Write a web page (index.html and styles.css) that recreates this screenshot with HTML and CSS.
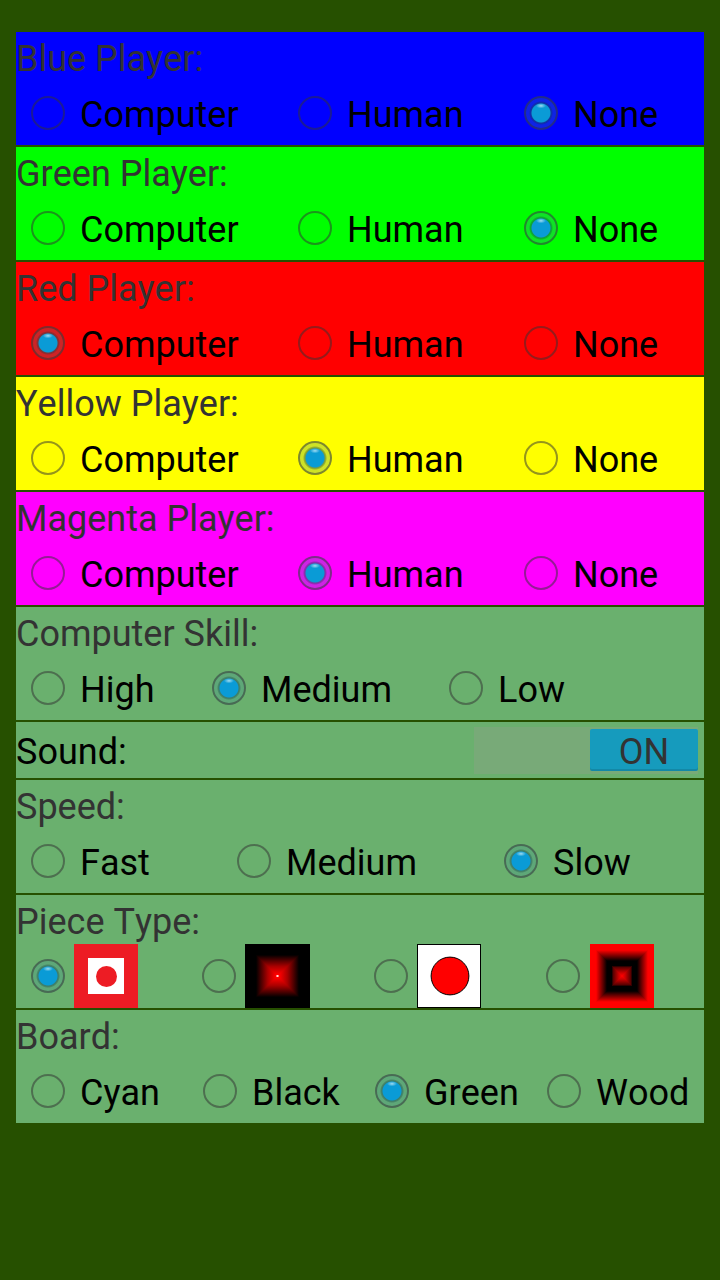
FILE: index.html
```html
<!DOCTYPE html>
<html lang="en">
<head>
  <meta charset="UTF-8" />
  <meta name="viewport" content="width=device-width, initial-scale=1.0" />
  <title>Options</title>
  <link rel="stylesheet" href="styles.css">
</head>
<body>

  <svg class="defs" width="0" height="0">
    <defs>
      <linearGradient id="glowStops">
        <stop offset="0" stop-color="#000" />
        <stop offset="0.34" stop-color="#000" />
        <stop offset="0.7" stop-color="#a00" />
        <stop offset="0.95" stop-color="#f00" />
        <stop offset="1" stop-color="#f22" />
      </linearGradient>
      <linearGradient id="ringStops">
        <stop offset="0" stop-color="#f00" />
        <stop offset="0.19" stop-color="#f00" />
        <stop offset="0.53" stop-color="#000" />
        <stop offset="0.68" stop-color="#000" />
        <stop offset="0.72" stop-color="#500" />
        <stop offset="0.9" stop-color="#c00" />
        <stop offset="1" stop-color="#f00" />
      </linearGradient>
      <linearGradient id="glowTop" href="#glowStops" gradientUnits="userSpaceOnUse" x1="0" y1="0" x2="0" y2="32" />
      <linearGradient id="glowBottom" href="#glowStops" gradientUnits="userSpaceOnUse" x1="0" y1="64" x2="0" y2="32" />
      <linearGradient id="glowLeft" href="#glowStops" gradientUnits="userSpaceOnUse" x1="0" y1="0" x2="32" y2="0" />
      <linearGradient id="glowRight" href="#glowStops" gradientUnits="userSpaceOnUse" x1="64" y1="0" x2="32" y2="0" />
      <linearGradient id="ringTop" href="#ringStops" gradientUnits="userSpaceOnUse" x1="0" y1="0" x2="0" y2="32" />
      <linearGradient id="ringBottom" href="#ringStops" gradientUnits="userSpaceOnUse" x1="0" y1="64" x2="0" y2="32" />
      <linearGradient id="ringLeft" href="#ringStops" gradientUnits="userSpaceOnUse" x1="0" y1="0" x2="32" y2="0" />
      <linearGradient id="ringRight" href="#ringStops" gradientUnits="userSpaceOnUse" x1="64" y1="0" x2="32" y2="0" />
    </defs>
  </svg>

  <div class="panel">

    <section class="group blue">
      <div class="title">Blue Player:</div>
      <div class="options players">
        <label class="option"><span class="radio"></span>Computer</label>
        <label class="option"><span class="radio"></span>Human</label>
        <label class="option"><span class="radio on"></span>None</label>
      </div>
    </section>

    <section class="group green">
      <div class="title">Green Player:</div>
      <div class="options players">
        <label class="option"><span class="radio"></span>Computer</label>
        <label class="option"><span class="radio"></span>Human</label>
        <label class="option"><span class="radio on"></span>None</label>
      </div>
    </section>

    <section class="group red">
      <div class="title">Red Player:</div>
      <div class="options players">
        <label class="option"><span class="radio on"></span>Computer</label>
        <label class="option"><span class="radio"></span>Human</label>
        <label class="option"><span class="radio"></span>None</label>
      </div>
    </section>

    <section class="group yellow">
      <div class="title">Yellow Player:</div>
      <div class="options players">
        <label class="option"><span class="radio"></span>Computer</label>
        <label class="option"><span class="radio on"></span>Human</label>
        <label class="option"><span class="radio"></span>None</label>
      </div>
    </section>

    <section class="group magenta">
      <div class="title">Magenta Player:</div>
      <div class="options players">
        <label class="option"><span class="radio"></span>Computer</label>
        <label class="option"><span class="radio on"></span>Human</label>
        <label class="option"><span class="radio"></span>None</label>
      </div>
    </section>

    <section class="group">
      <div class="title">Computer Skill:</div>
      <div class="options skill">
        <label class="option"><span class="radio"></span>High</label>
        <label class="option"><span class="radio on"></span>Medium</label>
        <label class="option"><span class="radio"></span>Low</label>
      </div>
    </section>

    <section class="group sound">
      <span class="sound-label">Sound:</span>
      <div class="toggle"><span class="toggle-thumb">ON</span></div>
    </section>

    <section class="group">
      <div class="title">Speed:</div>
      <div class="options speed">
        <label class="option"><span class="radio"></span>Fast</label>
        <label class="option"><span class="radio"></span>Medium</label>
        <label class="option"><span class="radio on"></span>Slow</label>
      </div>
    </section>

    <section class="group">
      <div class="title">Piece Type:</div>
      <div class="options pieces">
        <label class="option">
          <span class="radio on"></span>
          <span class="piece piece-flat"><span class="piece-flat-inner"><span class="piece-flat-dot"></span></span></span>
        </label>
        <label class="option">
          <span class="radio"></span>
          <svg class="piece piece-wide" viewBox="0 0 64 64" preserveAspectRatio="none">
            <polygon points="0,0 64,0 32,32" fill="url(#glowTop)" />
            <polygon points="0,64 64,64 32,32" fill="url(#glowBottom)" />
            <polygon points="0,0 0,64 32,32" fill="url(#glowLeft)" />
            <polygon points="64,0 64,64 32,32" fill="url(#glowRight)" />
            <rect x="31" y="31" width="2" height="2" fill="#fdd" />
          </svg>
        </label>
        <label class="option">
          <span class="radio"></span>
          <svg class="piece" viewBox="0 0 64 64">
            <rect x="0.5" y="0.5" width="63" height="63" fill="#fff" stroke="#000" />
            <circle cx="33" cy="32" r="18.9" fill="#f00" stroke="#000" />
          </svg>
        </label>
        <label class="option last-piece">
          <span class="radio"></span>
          <svg class="piece" viewBox="0 0 64 64">
            <polygon points="0,0 64,0 32,32" fill="url(#ringTop)" />
            <polygon points="0,64 64,64 32,32" fill="url(#ringBottom)" />
            <polygon points="0,0 0,64 32,32" fill="url(#ringLeft)" />
            <polygon points="64,0 64,64 32,32" fill="url(#ringRight)" />
          </svg>
        </label>
      </div>
    </section>

    <section class="group">
      <div class="title">Board:</div>
      <div class="options boards">
        <label class="option"><span class="radio"></span>Cyan</label>
        <label class="option"><span class="radio"></span>Black</label>
        <label class="option"><span class="radio on"></span>Green</label>
        <label class="option"><span class="radio"></span>Wood</label>
      </div>
    </section>

  </div>

</body>
</html>
```

FILE: styles.css
```css
body {
  margin: 0;
  padding: 32px 16px;
  font-family: Roboto, sans-serif;
  font-kerning: none;
  background-color: #265000;
  color: #000;
}

.defs {
  display: block;
  height: 0;
}

.panel {
  display: flex;
  flex-direction: column;
  gap: 2px;
}

.group {
  height: 113px;
  background-color: #6ab06e;
}

.blue { background-color: #00f; }
.green { background-color: #0f0; }
.red { background-color: #f00; }
.yellow { background-color: #ff0; }
.magenta { background-color: #f0f; }

.title {
  height: 49px;
  line-height: 54px;
  font-size: 36px;
  color: #333;
}

.options {
  display: grid;
  height: 64px;
  padding-left: 15px;
}

.players { grid-template-columns: 267px 226px 1fr; }
.skill { grid-template-columns: 181px 237px 1fr; }
.speed { grid-template-columns: 206px 267px 1fr; }
.pieces { grid-template-columns: 171px 172px 172px 1fr; }
.boards { grid-template-columns: 172px 172px 172px 1fr; }

.option {
  display: flex;
  align-items: flex-start;
  gap: 15px;
  height: 64px;
  font-size: 36px;
  line-height: 68px;
}

.pieces .option {
  gap: 9px;
}

.pieces .last-piece {
  gap: 10px;
}

.radio {
  flex: none;
  box-sizing: border-box;
  width: 34px;
  height: 34px;
  margin-top: 15px;
  border: 2px solid rgba(51, 51, 51, 0.52);
  border-radius: 50%;
}

.radio.on {
  background:
    radial-gradient(ellipse 5px 2.5px at 50% 26%, rgba(210, 240, 250, 0.75), transparent),
    radial-gradient(circle, #0a9bd6 9px, rgba(30, 90, 100, 0.6) 10px, rgba(30, 90, 100, 0.45) 11px, rgba(60, 140, 150, 0.25) 12px);
}

.piece {
  flex: none;
  display: block;
  width: 64px;
  height: 64px;
}

.piece polygon {
  shape-rendering: crispEdges;
}

.piece-wide {
  width: 65px;
}

.piece-flat {
  display: flex;
  align-items: center;
  justify-content: center;
  background-color: #ed1c24;
}

.piece-flat-inner {
  display: flex;
  align-items: center;
  justify-content: center;
  width: 36px;
  height: 36px;
  background-color: #fff;
}

.piece-flat-dot {
  width: 21px;
  height: 21px;
  border-radius: 50%;
  background-color: #ed1c24;
}

.sound {
  display: flex;
  align-items: center;
  justify-content: space-between;
  height: 56px;
  padding-right: 6px;
}

.sound-label {
  padding-top: 4px;
  font-size: 36px;
}

.toggle {
  display: flex;
  justify-content: flex-end;
  align-items: center;
  width: 224px;
  height: 47px;
  background-color: #78aa78;
}

.toggle-thumb {
  width: 108px;
  height: 42px;
  line-height: 46px;
  text-align: center;
  font-size: 36px;
  color: #333;
  background-color: #169bbd;
  border-radius: 2px;
  box-shadow: inset 0 -2px 0 rgba(0, 0, 0, 0.12);
}
```
